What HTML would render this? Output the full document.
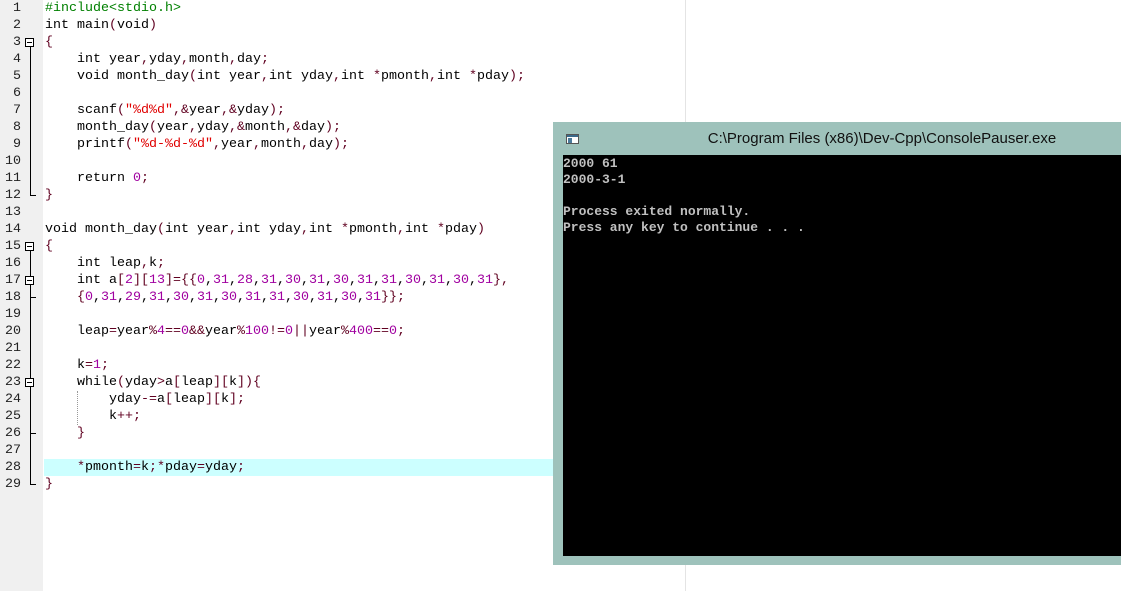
<!DOCTYPE html><html><head><meta charset="utf-8"><style>
body{margin:0;width:1121px;height:591px;background:#fff;position:relative;overflow:hidden;font-family:"Liberation Mono",monospace}
.g{position:absolute;left:0;top:0;width:43px;height:591px;background:#f0f0f0}
.ln{position:absolute;left:0;width:21px;text-align:right;font-size:13.33px;line-height:17px;color:#222}
.c{position:absolute;left:45px;top:0;font-size:13.33px;line-height:17px;white-space:pre;color:#000}
.hl{position:absolute;left:44px;top:459px;width:510px;height:17px;background:#ccffff}
.n{color:#a000a0}.s{color:#e00000}.p{color:#008000}.o{color:#600020}
.vm{position:absolute;left:685px;top:0;width:1px;height:591px;background:#e4e4e4}
.fb{position:absolute;left:25px;width:9px;height:9px;border:1px solid #000;background:#fff;box-sizing:border-box}
.fb:after{content:"";position:absolute;left:1px;top:3px;width:5px;height:1px;background:#000}
.vl{position:absolute;left:30px;width:1px;background:#000}
.tk{position:absolute;left:30px;width:6px;height:1px;background:#000}
.win{position:absolute;left:553px;top:122px;width:568px;height:443px;background:#9ec2bb}
.con{position:absolute;left:10px;top:33px;width:558px;height:400px;background:#000;color:#c0c0c0;font-size:13px;line-height:16px;white-space:pre;padding:1px 0 0 0;font-weight:bold}
.tt{position:absolute;left:0;width:568px;top:8px;text-align:center;font-family:"Liberation Sans",sans-serif;font-size:15px;color:#111;padding-left:90px;box-sizing:border-box}
</style></head><body>
<div class="g"></div>
<div class="hl"></div>
<div class="vm"></div>
<div class="ln" style="top:0">1<br>2<br>3<br>4<br>5<br>6<br>7<br>8<br>9<br>10<br>11<br>12<br>13<br>14<br>15<br>16<br>17<br>18<br>19<br>20<br>21<br>22<br>23<br>24<br>25<br>26<br>27<br>28<br>29</div>
<div class="fb" style="top:38px"></div><div class="vl" style="top:47px;height:148px"></div><div class="tk" style="top:195px"></div>
<div class="fb" style="top:242px"></div><div class="vl" style="top:251px;height:233px"></div><div class="tk" style="top:297px"></div><div class="tk" style="top:433px"></div><div class="tk" style="top:484px"></div>
<div class="fb" style="top:276px"></div><div class="fb" style="top:378px"></div>
<div style="position:absolute;left:77px;top:391px;height:34px;border-left:1px dotted #999"></div>
<div class="c"><span class="p">#include&lt;stdio.h&gt;</span>
int main<span class="o">(</span>void<span class="o">)</span>
<span class="o">{</span>
    int year<span class="o">,</span>yday<span class="o">,</span>month<span class="o">,</span>day<span class="o">;</span>
    void month_day<span class="o">(</span>int year<span class="o">,</span>int yday<span class="o">,</span>int <span class="o">*</span>pmonth<span class="o">,</span>int <span class="o">*</span>pday<span class="o">);</span>

    scanf<span class="o">(</span><span class="s">"%d%d"</span><span class="o">,&amp;</span>year<span class="o">,&amp;</span>yday<span class="o">);</span>
    month_day<span class="o">(</span>year<span class="o">,</span>yday<span class="o">,&amp;</span>month<span class="o">,&amp;</span>day<span class="o">);</span>
    printf<span class="o">(</span><span class="s">"%d-%d-%d"</span><span class="o">,</span>year<span class="o">,</span>month<span class="o">,</span>day<span class="o">);</span>

    return <span class="n">0</span><span class="o">;</span>
<span class="o">}</span>

void month_day<span class="o">(</span>int year<span class="o">,</span>int yday<span class="o">,</span>int <span class="o">*</span>pmonth<span class="o">,</span>int <span class="o">*</span>pday<span class="o">)</span>
<span class="o">{</span>
    int leap<span class="o">,</span>k<span class="o">;</span>
    int a<span class="o">[</span><span class="n">2</span><span class="o">][</span><span class="n">13</span><span class="o">]={{</span><span class="n">0</span>,<span class="n">31</span>,<span class="n">28</span>,<span class="n">31</span>,<span class="n">30</span>,<span class="n">31</span>,<span class="n">30</span>,<span class="n">31</span>,<span class="n">31</span>,<span class="n">30</span>,<span class="n">31</span>,<span class="n">30</span>,<span class="n">31</span><span class="o">},</span>
    <span class="o">{</span><span class="n">0</span>,<span class="n">31</span>,<span class="n">29</span>,<span class="n">31</span>,<span class="n">30</span>,<span class="n">31</span>,<span class="n">30</span>,<span class="n">31</span>,<span class="n">31</span>,<span class="n">30</span>,<span class="n">31</span>,<span class="n">30</span>,<span class="n">31</span><span class="o">}};</span>

    leap<span class="o">=</span>year<span class="o">%</span><span class="n">4</span><span class="o">==</span><span class="n">0</span><span class="o">&amp;&amp;</span>year<span class="o">%</span><span class="n">100</span><span class="o">!=</span><span class="n">0</span><span class="o">||</span>year<span class="o">%</span><span class="n">400</span><span class="o">==</span><span class="n">0</span><span class="o">;</span>

    k<span class="o">=</span><span class="n">1</span><span class="o">;</span>
    while<span class="o">(</span>yday<span class="o">&gt;</span>a<span class="o">[</span>leap<span class="o">][</span>k<span class="o">]){</span>
        yday<span class="o">-=</span>a<span class="o">[</span>leap<span class="o">][</span>k<span class="o">];</span>
        k<span class="o">++;</span>
    <span class="o">}</span>

    <span class="o">*</span>pmonth<span class="o">=</span>k<span class="o">;*</span>pday<span class="o">=</span>yday<span class="o">;</span>
<span class="o">}</span></div>
<div class="win">
<div style="position:absolute;left:13px;top:12px;width:13px;height:10px;background:#fff;border:1px solid #555;box-sizing:border-box"><div style="position:absolute;left:0;top:0;width:11px;height:2px;background:#3a6a8a"></div><div style="position:absolute;left:1px;top:3px;width:4px;height:5px;background:#4a7a9a"></div></div>
<div class="tt">C:\Program Files (x86)\Dev-Cpp\ConsolePauser.exe</div>
<div class="con">2000 61
2000-3-1

Process exited normally.
Press any key to continue . . .</div>
</div>
</body></html>
